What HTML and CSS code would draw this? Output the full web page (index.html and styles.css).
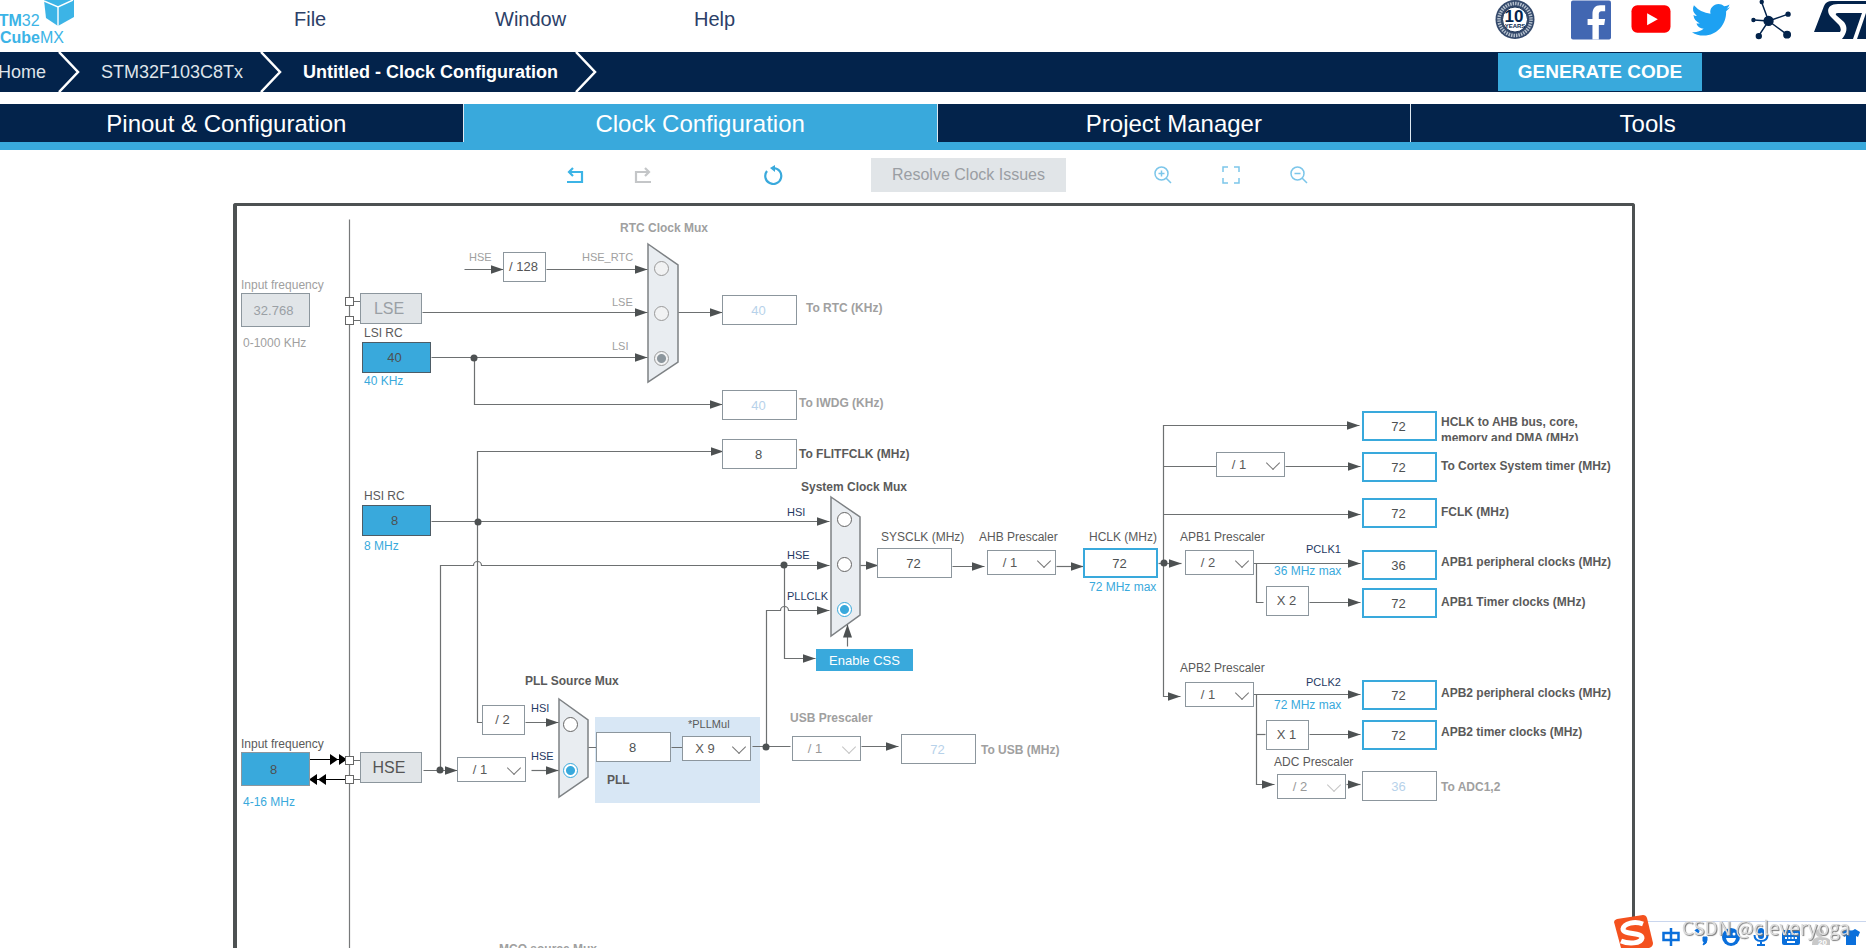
FILE: index.html
```html
<!DOCTYPE html>
<html lang="en">
<head>
<meta charset="utf-8">
<title>STM32CubeMX - Clock Configuration</title>
<link rel="stylesheet" href="styles.css">
</head>
<body>
<header class="top">
  <a class="logo" href="#" aria-label="STM32 CubeMX">
    <span class="logo-line"><b>STM</b>32</span>
    <span class="logo-line logo-low"><b>Cube</b>MX</span>
    <svg class="cube" viewBox="0 0 30 26" aria-hidden="true"><path d="M0 0H30V17L14 26 2 18Z" fill="#3cb4e6"/><path d="M0 1 14 7 29 0M14 7V26" fill="none" stroke="#fff" stroke-width="1.4"/></svg>
  </a>
  <nav class="menu">
    <a href="#">File</a><a href="#">Window</a><a href="#">Help</a>
  </nav>
  <div class="social">
    <a href="#" class="badge" aria-label="10 years">
      <svg viewBox="0 0 40 40"><circle cx="20" cy="19.500" r="19.500" fill="#34496b"/><circle cx="20" cy="19.500" r="16" fill="none" stroke="#b4bfcc" stroke-width="3.500" stroke-dasharray="1.500 1"/><circle cx="20" cy="19.500" r="12.500" fill="#fff" stroke="#1d3557" stroke-width="1"/><text x="19" y="22" class="ten">10</text><text x="20" y="28" class="years">YEARS</text></svg>
    </a>
    <a href="#" aria-label="Facebook"><svg viewBox="0 0 41 40"><rect width="41" height="40" rx="2" fill="#4267b2"/><path d="M22 40V25H17V19H22V14C22 8 25 5 30 5H35V11H32C29 11 28.500 12.500 28.500 15V19H35L34 25H28.500V40Z" fill="#fff"/></svg></a>
    <a href="#" aria-label="YouTube"><svg viewBox="0 0 41 40"><rect x="0.500" y="5" width="40" height="28" rx="6" fill="#f00"/><path d="M16.500 13V25.500L27.500 19.200Z" fill="#fff"/></svg></a>
    <a href="#" aria-label="Twitter"><svg viewBox="0 0 41 40"><path d="M40 7Q38 9.500 36 11C36.500 24 27 36 13 36Q6 36 1 32.500Q8 33 13 29Q7.500 28.500 5.500 23.500H9Q3 21 2.500 15Q4 16 6 16Q0 11 3 5Q10 13 20 13.500C18 6 28 0 34 6Q37 5.500 39.500 4Q38.500 7 36.500 8.500Z" fill="#1da1f2"/></svg></a>
    <a href="#" aria-label="Community"><svg viewBox="0 0 41 40"><g stroke="#03234b" stroke-width="1.500" fill="#03234b"><path d="M18 21 11 2M18 21 38 14M18 21 3 20M18 21 8 36M18 21 37 35"/><circle cx="18" cy="21" r="4.500"/><circle cx="11" cy="1.500" r="1.500"/><circle cx="38" cy="14" r="2"/><circle cx="2.500" cy="20" r="1.500"/><circle cx="8" cy="36.500" r="2.500"/><circle cx="37" cy="35" r="3.300"/></g></svg></a>
    <a href="#" class="st" aria-label="STMicroelectronics"><svg viewBox="0 0 76 40"><path d="M0 32 10 6Q12 1 18 1H76V4H24C13 4 12 12 17 17L25 25Q28 29 26 32Z" fill="#03234b"/><path d="M24 13H48L39 39H28C33 33 34 27 30 22L22 15Q21 13 24 13Z" fill="#03234b"/><path d="M43 39 52 13H76V39Z" fill="#03234b"/></svg></a>
  </div>
</header>

<nav class="crumbs" aria-label="Breadcrumb">
  <a href="#" class="crumb home">Home</a>
  <svg class="chev" viewBox="0 0 22 40" aria-hidden="true"><path d="M1 0 20 20 1 40"/></svg>
  <a href="#" class="crumb chip">STM32F103C8Tx</a>
  <svg class="chev" viewBox="0 0 22 40" aria-hidden="true"><path d="M1 0 20 20 1 40"/></svg>
  <a href="#" class="crumb current">Untitled - Clock Configuration</a>
  <svg class="chev" viewBox="0 0 22 40" aria-hidden="true"><path d="M1 0 20 20 1 40"/></svg>
  <button class="generate" type="button">GENERATE CODE</button>
</nav>

<nav class="tabs">
  <button type="button">Pinout &amp; Configuration</button>
  <button type="button" class="active">Clock Configuration</button>
  <button type="button">Project Manager</button>
  <button type="button">Tools</button>
</nav>

<div class="tools">
  <button type="button" class="tool" aria-label="Undo"><svg viewBox="0 0 18 18"><path d="M1 16H16V6H3M7 2 3 6 7 10" stroke="#3cb4e6" stroke-width="2.200" fill="none"/></svg></button>
  <button type="button" class="tool" aria-label="Redo"><svg viewBox="0 0 18 18"><path d="M17 16H2V6H15M11 2 15 6 11 10" stroke="#c4c6c8" stroke-width="2.200" fill="none"/></svg></button>
  <button type="button" class="tool refresh" aria-label="Reset"><svg viewBox="0 0 20 20"><path d="M3 6A8 8 0 1 0 10 3" stroke="#39a9dc" stroke-width="2.200" fill="none"/><path d="M6 3 11 0V7Z" fill="#39a9dc"/></svg></button>
  <button type="button" class="resolve" disabled>Resolve Clock Issues</button>
  <button type="button" class="tool" aria-label="Zoom in"><svg viewBox="0 0 18 18"><g class="thin"><circle cx="7.500" cy="7.500" r="6.500"/><path d="M12 12 17 17M4.500 7.500H10.500M7.500 4.500V10.500"/></g></svg></button>
  <button type="button" class="tool" aria-label="Fit"><svg viewBox="0 0 18 18"><path class="thin" d="M6 1H1V6M12 1H17V6M1 12V17H6M17 12V17H12"/></svg></button>
  <button type="button" class="tool" aria-label="Zoom out"><svg viewBox="0 0 18 18"><g class="thin"><circle cx="7.500" cy="7.500" r="6.500"/><path d="M12 12 17 17M4.500 7.500H10.500"/></g></svg></button>
</div>

<main class="board">
  <span class="pll" style="left:358px;top:511px"></span>
  <svg class="wires" width="1395" height="760" aria-hidden="true">
    <defs>
      <marker id="arr" markerUnits="userSpaceOnUse" markerWidth="13" markerHeight="10" refX="13" refY="5" orient="auto"><path d="M0 .5 13 5 0 9.500Z" fill="#4d5152"/></marker>
    </defs>
    <g class="mux">
      <path d="M411 38 441 59V156L411 176Z"/>
      <path d="M322 493 351 514V571L322 591Z"/>
      <path d="M594 291 623 311V409L594 430Z"/>
    </g>
    <g class="line" transform="translate(.5 .5)">
      <path class="rail" d="M112 13V760"/>
      <path d="M112 95H123M112 114H123M112 554H123M112 573H123"/>
      <path d="M309 63H410" class="a"/><path d="M227 63H266" class="a"/>
      <path d="M185 106H410" class="a"/><path d="M194 151H410" class="a"/>
      <path d="M237 151V198H485" class="a"/><path d="M441 106H485" class="a"/>
      <path d="M240 315V245H486" class="a"/>
      <path d="M194 315H592" class="a"/>
      <path d="M240 315V516H245"/><path d="M288 516H321" class="a"/>
      <path d="M186 564H220" class="a"/><path d="M294 564H321" class="a"/>
      <path d="M203 564V359H236A4 4 0 0 1 244 359H592" class="a"/>
      <path d="M547 359V452H578" class="a"/><path d="M610 440V418" class="a"/>
      <path d="M351 541H359M434 541H445M515 540H553"/>
      <path d="M529 540V404H543A4 4 0 0 1 551 404H592" class="a"/>
      <path d="M624 540H661" class="a"/><path d="M623 359H641" class="a"/>
      <path d="M715 360H747" class="a"/><path d="M819 360H846" class="a"/>
      <path d="M921 357H944" class="a"/>
      <path d="M926 357V219H1122" class="a"/><path d="M926 260H979"/><path d="M1048 260H1123" class="a"/>
      <path d="M926 308H1123" class="a"/>
      <path d="M926 357V490H943" class="a"/>
      <path d="M1016 357H1123" class="a"/><path d="M1019 357V396H1026"/><path d="M1072 396H1123" class="a"/>
      <path d="M1016 488H1123" class="a"/><path d="M1019 528H1028"/><path d="M1072 528H1123" class="a"/>
      <path d="M1019 488V578H1037" class="a"/><path d="M1109 578H1123" class="a"/>
    </g>
    <g fill="#4d5152">
      <circle cx="237" cy="152" r="3.500"/><circle cx="241" cy="316" r="3.500"/><circle cx="203" cy="564" r="3.500"/>
      <circle cx="547" cy="359" r="3.500"/><circle cx="529" cy="541" r="3.500"/><circle cx="927" cy="357" r="3.500"/>
    </g>
    <path d="M73 553.500H112M73 573.500H112" stroke="#000"/>
    <path d="M93 548 101 553.500 93 559ZM102 548 110 553.500 102 559ZM80 568 72 573.500 80 579ZM89 568 81 573.500 89 579Z"/>
    <g class="pin"><rect x="108.500" y="91.500" width="8" height="8"/><rect x="108.500" y="110.500" width="8" height="8"/><rect x="108.500" y="550.500" width="8" height="8"/><rect x="108.500" y="569.500" width="8" height="8"/></g>
  </svg>

  <!-- oscillators -->
  <label class="t dim" for="lsef" style="left:4px;top:71px">Input frequency</label>
  <input class="osc off" id="lsef" value="32.768" disabled style="left:4px;top:87px">
  <span class="t dim" style="left:6px;top:129px">0-1000 KHz</span>
  <span class="src off" style="left:123px;top:87px">LSE</span>
  <label class="t" for="lsi" style="left:127px;top:119px">LSI RC</label>
  <input class="osc rc" id="lsi" value="40" readonly style="left:125px;top:136px">
  <span class="t blue" style="left:127px;top:167px">40 KHz</span>
  <label class="t" for="hsi" style="left:127px;top:282px">HSI RC</label>
  <input class="osc rc" id="hsi" value="8" readonly style="left:125px;top:299px">
  <span class="t blue" style="left:127px;top:332px">8 MHz</span>
  <label class="t" for="hsef" style="left:4px;top:530px">Input frequency</label>
  <input class="osc" id="hsef" value="8" style="left:4px;top:546px">
  <span class="t blue" style="left:6px;top:588px">4-16 MHz</span>
  <span class="src" style="left:123px;top:546px">HSE</span>

  <!-- RTC clock mux -->
  <span class="t dim small" style="left:232px;top:43px">HSE</span>
  <span class="fix" style="left:266px;top:46px">/ 128</span>
  <span class="t b dim" style="left:383px;top:14px">RTC Clock Mux</span>
  <label class="t dim small" for="r1" style="left:345px;top:43px">HSE_RTC</label>
  <label class="t dim small" for="r2" style="left:375px;top:88px">LSE</label>
  <label class="t dim small" for="r3" style="left:375px;top:132px">LSI</label>
  <input type="radio" name="rtc" id="r1" disabled style="left:417px;top:55px">
  <input type="radio" name="rtc" id="r2" disabled style="left:417px;top:100px">
  <input type="radio" name="rtc" id="r3" disabled checked style="left:417px;top:145px">
  <input class="val" id="ortc" value="40" disabled style="left:485px;top:89px">
  <label class="t b dim" for="ortc" style="left:569px;top:94px">To RTC (KHz)</label>
  <input class="val" id="oiwdg" value="40" disabled style="left:485px;top:184px">
  <label class="t b dim" for="oiwdg" style="left:562px;top:189px">To IWDG (KHz)</label>
  <input class="val" id="oflit" value="8" readonly style="left:485px;top:233px">
  <label class="t b" for="oflit" style="left:562px;top:240px">To FLITFCLK (MHz)</label>

  <!-- PLL -->
  <span class="t b" style="left:288px;top:467px">PLL Source Mux</span>
  <label class="t navy small" for="p1" style="left:294px;top:494px">HSI</label>
  <label class="t navy small" for="p2" style="left:294px;top:542px">HSE</label>
  <span class="fix" style="left:245px;top:499px">/ 2</span>
  <span class="sel" style="left:220px;top:551px"><select aria-label="HSE divider"><option>/ 1</option></select></span>
  <input type="radio" name="pll" id="p1" style="left:326px;top:511px">
  <input type="radio" name="pll" id="p2" checked style="left:326px;top:557px">
  <input class="val" id="pllin" value="8" readonly style="left:359px;top:526px">
  <label class="t b" for="pllin" style="left:370px;top:566px">PLL</label>
  <label class="t small" for="mul" style="left:451px;top:510px">*PLLMul</label>
  <span class="sel" style="left:445px;top:530px"><select id="mul"><option>X 9</option></select></span>
  <label class="t b dim" for="usbp" style="left:553px;top:504px">USB Prescaler</label>
  <span class="sel dis" style="left:555px;top:530px"><select id="usbp" disabled><option>/ 1</option></select></span>
  <input class="val" id="ousb" value="72" disabled style="left:664px;top:528px">
  <label class="t b dim" for="ousb" style="left:744px;top:536px">To USB (MHz)</label>

  <!-- system clock mux -->
  <span class="t b" style="left:564px;top:273px">System Clock Mux</span>
  <label class="t navy small" for="s1" style="left:550px;top:298px">HSI</label>
  <label class="t navy small" for="s2" style="left:550px;top:341px">HSE</label>
  <label class="t navy small" for="s3" style="left:550px;top:382px">PLLCLK</label>
  <input type="radio" name="sys" id="s1" style="left:600px;top:306px">
  <input type="radio" name="sys" id="s2" style="left:600px;top:351px">
  <input type="radio" name="sys" id="s3" checked style="left:600px;top:396px">
  <button type="button" class="css" style="left:579px;top:443px">Enable CSS</button>
  <label class="t" for="sysclk" style="left:644px;top:323px">SYSCLK (MHz)</label>
  <input class="val" id="sysclk" value="72" readonly style="left:640px;top:342px">
  <label class="t" for="ahb" style="left:742px;top:323px">AHB Prescaler</label>
  <span class="sel" style="left:750px;top:344px"><select id="ahb"><option>/ 1</option></select></span>
  <label class="t" for="hclk" style="left:852px;top:323px">HCLK (MHz)</label>
  <input class="val hot" id="hclk" value="72" style="left:846px;top:342px">
  <span class="t blue" style="left:852px;top:373px">72 MHz max</span>

  <!-- bus outputs -->
  <input class="val hot" id="o1" value="72" readonly style="left:1125px;top:205px">
  <label class="t b wrap" for="o1" style="left:1204px;top:208px">HCLK to AHB bus, core, memory and DMA (MHz)</label>
  <span class="sel" style="left:979px;top:246px"><select aria-label="Cortex prescaler"><option>/ 1</option></select></span>
  <input class="val hot" id="o2" value="72" readonly style="left:1125px;top:246px">
  <label class="t b" for="o2" style="left:1204px;top:252px">To Cortex System timer (MHz)</label>
  <input class="val hot" id="o3" value="72" readonly style="left:1125px;top:292px">
  <label class="t b" for="o3" style="left:1204px;top:298px">FCLK (MHz)</label>

  <label class="t" for="apb1" style="left:943px;top:323px">APB1 Prescaler</label>
  <span class="sel" style="left:948px;top:344px"><select id="apb1"><option>/ 2</option></select></span>
  <span class="t navy small" style="left:1069px;top:335px">PCLK1</span>
  <span class="t blue" style="left:1037px;top:357px">36 MHz max</span>
  <input class="val hot" id="o4" value="36" readonly style="left:1125px;top:344px">
  <label class="t b" for="o4" style="left:1204px;top:348px">APB1 peripheral clocks (MHz)</label>
  <span class="fix" style="left:1029px;top:380px">X 2</span>
  <input class="val hot" id="o5" value="72" readonly style="left:1125px;top:382px">
  <label class="t b" for="o5" style="left:1204px;top:388px">APB1 Timer clocks (MHz)</label>

  <label class="t" for="apb2" style="left:943px;top:454px">APB2 Prescaler</label>
  <span class="sel" style="left:948px;top:476px"><select id="apb2"><option>/ 1</option></select></span>
  <span class="t navy small" style="left:1069px;top:468px">PCLK2</span>
  <span class="t blue" style="left:1037px;top:491px">72 MHz max</span>
  <input class="val hot" id="o6" value="72" readonly style="left:1125px;top:474px">
  <label class="t b" for="o6" style="left:1204px;top:479px">APB2 peripheral clocks (MHz)</label>
  <span class="fix" style="left:1029px;top:514px">X 1</span>
  <input class="val hot" id="o7" value="72" readonly style="left:1125px;top:514px">
  <label class="t b" for="o7" style="left:1204px;top:518px">APB2 timer clocks (MHz)</label>
  <label class="t" for="adc" style="left:1037px;top:548px">ADC Prescaler</label>
  <span class="sel dis" style="left:1040px;top:568px"><select id="adc" disabled><option>/ 2</option></select></span>
  <input class="val" id="o8" value="36" disabled style="left:1125px;top:565px">
  <label class="t b dim" for="o8" style="left:1204px;top:573px">To ADC1,2</label>

  <span class="t b dim" style="left:262px;top:735px">MCO source Mux</span>
</main>

<aside class="ime">
  <svg class="sogou" viewBox="0 0 40 33" aria-hidden="true"><path d="M0 7Q0 5 3 4L29 0Q32 0 33 3L39 28Q39 32 35 33H7Z" fill="#f4511e"/><path d="M29 9C21 6 10 8 9 14C9 20 28 17 28 23C27 29 14 29 7 26" fill="none" stroke="#fff" stroke-width="5"/></svg>
  <div class="ime-bar">
    <svg viewBox="0 0 18 18"><path d="M1.500 5H16.500V12H1.500ZM9 0V18" fill="none" stroke="#0a6fdb" stroke-width="2.500"/></svg>
    <svg viewBox="0 0 18 18"><path d="M3 3A2 2 0 1 1 6 5M11 9H15V12Q15 16 11 17 13 14 11 13Z" fill="#0a6fdb" stroke="#0a6fdb"/></svg>
    <svg viewBox="0 0 18 18"><circle cx="9" cy="9" r="9" fill="#0a6fdb"/><circle cx="6" cy="6" r="1.500" fill="#fff"/><circle cx="12" cy="6" r="1.500" fill="#fff"/><path d="M4 10H14Q13 15 9 15T4 10Z" fill="#fff"/></svg>
    <svg viewBox="0 0 18 18"><rect x="6" y="0" width="6" height="11" rx="3" fill="#0a6fdb"/><path d="M2.500 7Q2.500 13 9 13T15.500 7M9 13V17M5 17H13" fill="none" stroke="#0a6fdb" stroke-width="2"/></svg>
    <svg viewBox="0 0 18 18"><rect y="2" width="18" height="15" rx="2" fill="#0a6fdb"/><path d="M3 6H15M3 10H15" stroke="#fff" stroke-width="2" stroke-dasharray="2 1.300"/><path d="M5 14H13" stroke="#fff" stroke-width="2"/></svg>
    <svg viewBox="0 0 18 18"><circle cx="8" cy="5" r="4" fill="#c8c8c8"/><path d="M0 17Q0 9 8 9T18 12V17Z" fill="#c8c8c8"/><text x="6" y="17" class="twenty">20</text></svg>
    <svg viewBox="0 0 18 18"><path d="M5 1Q9 4 13 1L18 4 16 9 14 8V17H4V8L2 9 0 4Z" fill="#0a6fdb"/></svg>
  </div>
  <span class="mark">CSDN @cleveryoga</span>
</aside>
</body>
</html>
```
FILE: styles.css
```css
* { box-sizing: border-box; }

body {
  margin: 0;
  height: 100vh;
  display: flex;
  flex-direction: column;
  overflow: hidden;
  background: #fff;
  color: #555;
  font-family: "Liberation Sans", Arial, sans-serif;
}

a { color: inherit; text-decoration: none; }
button, input, select { font-family: inherit; margin: 0; }
button { border: 0; padding: 0; background: none; }
svg { display: block; }

/* header */
.top {
  height: 52px;
  flex: none;
  display: flex;
  justify-content: space-between;
}
.logo {
  width: 74px;
  height: 48px;
  color: #3cb4e6;
  font-size: 16px;
  line-height: 17px;
  display: flex;
  flex-direction: column;
  padding-top: 12px;
  margin-left: -12px;
  position: relative;
}
.logo-low { padding-left: 12px; }
.cube { position: absolute; left: 56px; top: 0; width: 30px; height: 26px; }
.menu {
  flex: 1;
  display: flex;
  gap: 94px;
  padding: 7px 0 0 232px;
  font-size: 20px;
  line-height: 24px;
  color: #2c4068;
}
.menu a:nth-child(1) { width: 107px; }
.menu a:nth-child(2) { width: 105px; }
.social { display: flex; gap: 20px; margin-right: -24px; }
.social a { width: 40px; height: 40px; }
.social svg { width: 100%; height: 100%; }
.social .badge { margin-right: 16px; }
.social .st { width: 76px; margin-left: 3px; }
.ten { font: bold 17px "Liberation Sans", sans-serif; text-anchor: middle; fill: #03234b; }
.years { font: bold 6px "Liberation Sans", sans-serif; text-anchor: middle; fill: #03234b; }

/* breadcrumb */
.crumbs {
  height: 40px;
  flex: none;
  display: flex;
  align-items: center;
  background: #03234b;
  color: #dfe4ea;
  font-size: 18px;
  margin-bottom: 12px;
}
.crumb { white-space: nowrap; }
.home { width: 60px; margin-left: -2px; }
.chip { width: 180px; padding-left: 21px; }
.current { width: 293px; padding-left: 21px; color: #fff; font-weight: bold; }
.chev { width: 22px; height: 40px; flex: none; }
.chev path { fill: none; stroke: #fff; stroke-width: 2.5; }
.generate {
  width: 204px;
  height: 38px;
  margin: 0 164px 0 auto;
  background: #39a9dc;
  color: #fff;
  font-size: 19px;
  font-weight: bold;
}

/* tabs */
.tabs {
  flex: none;
  display: grid;
  grid-template-columns: repeat(4, 1fr);
  height: 46px;
  margin: 0 -19px 0 -10px;
  border-bottom: 8px solid #39a9dc;
  background: #39a9dc;
}
.tabs button {
  background: #03234b;
  color: #fff;
  font-size: 24px;
  padding-top: 2px;
  border-right: 1px solid #dfe8f0;
}
.tabs .active { background: #39a9dc; }

/* toolbar */
.tools {
  height: 50px;
  margin-bottom: 3px;
  flex: none;
  display: flex;
  align-items: center;
  justify-content: center;
  gap: 50px;
  padding-left: 8px;
}
.tool, .tool svg { width: 18px; height: 18px; }
.refresh, .refresh svg { width: 20px; height: 20px; }
.refresh { margin: 0 37px 0 62px; }
.resolve {
  width: 195px;
  height: 34px;
  margin-right: 38px;
  background: #e1e5e8;
  color: #9a9ea3;
  font-size: 16px;
}
.thin { fill: none; stroke: #7cc6ea; stroke-width: 1.5; }

/* clock tree */
.board {
  flex: 1;
  position: relative;
  margin: 0 231px 0 233px;
  border: 3px solid #4d5152;
  border-left-width: 4px;
  border-bottom: 0;
  border-radius: 3px 3px 0 0;
  overflow: hidden;
}
.board > :not(svg) { position: absolute; }
.wires { position: absolute; left: 0; top: 0; }
.line path { fill: none; stroke: #6d7071; stroke-width: 1.2; }
.line .rail { stroke: #77797a; }
.line .a { marker-end: url(#arr); }
.mux path { fill: #e9edf1; stroke: #7d8184; stroke-width: 1.5; }
.pin rect { fill: #fff; stroke: #666; }
.pll { width: 165px; height: 86px; background: #d8e7f5; }

.t { font-size: 12px; line-height: 16px; white-space: nowrap; color: #5a5a5a; }
.t.small { font-size: 11px; }
.t.b { font-weight: bold; }
.t.dim { color: #a0a0a0; }
.t.blue { color: #39a9dc; }
.t.navy { color: #1f3a63; }
.t.wrap { width: 150px; height: 27px; overflow: hidden; white-space: normal; }

.osc, .val {
  border: 1px solid #8c969d;
  padding: 0 2px 0 0;
  text-align: center;
  font-size: 13px;
  color: #4d5152;
  background: #fff;
}
.osc { width: 69px; height: 34px; padding-right: 4px; background: #39a9dc; }
.osc.rc { height: 31px; border-color: #4d5c66; }
.osc.off { background: #e1e5e8; color: #9aa0a5; }
.val { width: 75px; height: 30px; }
.val:disabled { color: #b7d2ea; }
.val.hot { border: 2px solid #39a9dc; }
.src {
  width: 62px;
  height: 31px;
  padding-right: 4px;
  border: 1px solid #8c969d;
  background: #e1e5e8;
  font-size: 16px;
  line-height: 29px;
  text-align: center;
}
.src.off { color: #9aa0a5; }
.fix {
  width: 43px;
  height: 30px;
  padding-right: 2px;
  border: 1px solid #8c969d;
  background: #fff;
  font-size: 13px;
  line-height: 28px;
  text-align: center;
}
.sel { width: 69px; height: 25px; }
.sel select {
  width: 100%;
  height: 100%;
  appearance: none;
  border: 1px solid #8c969d;
  border-radius: 0;
  background: #fff;
  color: #5a5a5a;
  font-size: 13px;
  padding: 0 23px 0 0;
  text-align-last: center;
  opacity: 1;
}
.sel::after {
  content: "";
  position: absolute;
  left: 52px;
  top: 6px;
  width: 9px;
  height: 9px;
  border: solid #777;
  border-width: 0 1px 1px 0;
  transform: rotate(45deg);
  pointer-events: none;
}
.sel.dis select { color: #999; }
.sel.dis::after { border-color: #c4c4c4; }

input[type="radio"] {
  appearance: none;
  width: 15px;
  height: 15px;
  border: 1px solid #666;
  border-radius: 50%;
  background: #fff;
}
input[type="radio"]:disabled { border-color: #999; background: #f1f2f3; }
input[type="radio"]:checked {
  border-color: #39a9dc;
  background: radial-gradient(circle, #39a9dc 0 4px, #fff 5px);
}
input[type="radio"]:disabled:checked {
  border-color: #999;
  background: radial-gradient(circle, #8c969d 0 4px, #f1f2f3 5px);
}
.css { width: 97px; height: 22px; background: #39a9dc; color: #fff; font-size: 13px; }

/* input method bar, floating over the bottom corner */
.ime {
  position: fixed;
  right: 0;
  bottom: 0;
  width: 252px;
  height: 33px;
  display: flex;
}
.sogou { position: relative; width: 40px; height: 33px; flex: none; }
.ime-bar {
  flex: 1;
  margin: 6px 0 0 -8px;
  border-top: 1px solid #c9d6ee;
  background: #fff;
  display: flex;
  gap: 12px;
  padding: 6px 0 0 16px;
}
.ime-bar svg { width: 18px; height: 18px; flex: none; }
.twenty { font: bold 8px "Liberation Sans", sans-serif; fill: #fff; }
.mark {
  position: absolute;
  right: 16px;
  top: 0;
  font-family: "Noto Sans CJK SC", "Noto Sans", sans-serif;
  font-size: 19px;
  line-height: 24px;
  color: #dcdcdc;
  text-shadow: 1px 1px 1px #777;
}
```
